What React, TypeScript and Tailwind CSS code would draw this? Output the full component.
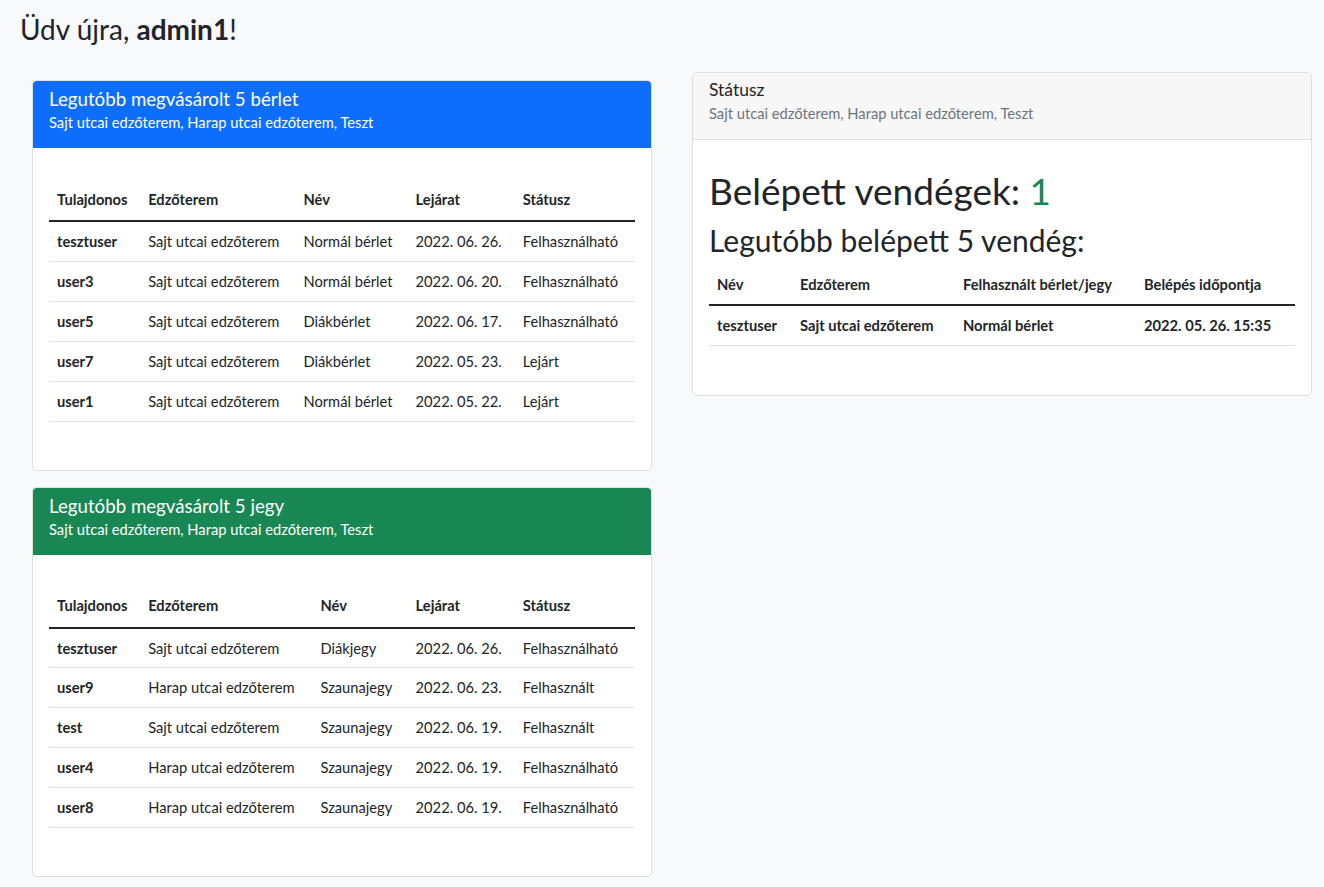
import React from "react";

type Row = string[];

const berlet: Row[] = [
  ["tesztuser", "Sajt utcai edzőterem", "Normál bérlet", "2022. 06. 26.", "Felhasználható"],
  ["user3", "Sajt utcai edzőterem", "Normál bérlet", "2022. 06. 20.", "Felhasználható"],
  ["user5", "Sajt utcai edzőterem", "Diákbérlet", "2022. 06. 17.", "Felhasználható"],
  ["user7", "Sajt utcai edzőterem", "Diákbérlet", "2022. 05. 23.", "Lejárt"],
  ["user1", "Sajt utcai edzőterem", "Normál bérlet", "2022. 05. 22.", "Lejárt"],
];

const jegy: Row[] = [
  ["tesztuser", "Sajt utcai edzőterem", "Diákjegy", "2022. 06. 26.", "Felhasználható"],
  ["user9", "Harap utcai edzőterem", "Szaunajegy", "2022. 06. 23.", "Felhasznált"],
  ["test", "Sajt utcai edzőterem", "Szaunajegy", "2022. 06. 19.", "Felhasznált"],
  ["user4", "Harap utcai edzőterem", "Szaunajegy", "2022. 06. 19.", "Felhasználható"],
  ["user8", "Harap utcai edzőterem", "Szaunajegy", "2022. 06. 19.", "Felhasználható"],
];

const heads = ["Tulajdonos", "Edzőterem", "Név", "Lejárat", "Státusz"];

function PurchaseTable({ rows, widths }: { rows: Row[]; widths: string[] }) {
  return (
    <table className="w-full table-fixed border-collapse text-[14.7px] text-[#212529]">
      <colgroup>
        {widths.map((w, i) => (
          <col key={i} className={w} />
        ))}
      </colgroup>
      <thead>
        <tr className="h-[43px] border-b-2 border-[#212529]">
          {heads.map((h) => (
            <th key={h} className="px-2 text-left align-middle font-bold">
              {h}
            </th>
          ))}
        </tr>
      </thead>
      <tbody>
        {rows.map((r, i) => (
          <tr key={i} className="h-[40px] border-b border-[#dee2e6]">
            {r.map((c, j) => (
              <td key={j} className={`px-2 align-middle whitespace-nowrap ${j === 0 ? "font-bold" : "font-normal"}`}>
                {c}
              </td>
            ))}
          </tr>
        ))}
      </tbody>
    </table>
  );
}

function PurchaseCard({
  title,
  headerClass,
  rows,
  widths,
}: {
  title: string;
  headerClass: string;
  rows: Row[];
  widths: string[];
}) {
  return (
    <div className="overflow-hidden rounded-[5px] border border-[#dfdfdf] bg-white">
      <div className={`h-[67px] px-4 pt-[6px] text-white ${headerClass}`}>
        <div className="text-[18.7px] leading-[24px]">{title}</div>
        <div className="mt-[1px] text-[14.7px] leading-[20px]">
          Sajt utcai edzőterem, Harap utcai edzőterem, Teszt
        </div>
      </div>
      <div className="px-4 pt-[30px] pb-[48px]">
        <PurchaseTable rows={rows} widths={widths} />
      </div>
    </div>
  );
}

export default function App() {
  return (
    <div
      className="min-h-[887px] bg-[#f8f9fa] text-[#212529]"
      style={{ fontFamily: "Lato, 'Open Sans', sans-serif" }}
    >
      <div className="px-5 pt-[12px]">
        <h3 className="text-[28px] leading-[34px]">
          Üdv újra, <span className="font-bold">admin1</span>!
        </h3>
      </div>
      <div className="mt-[26px] flex gap-[40px] px-[12px]">
        <div className="flex w-[620px] flex-col gap-[16px] pt-[8px] pl-[20px] box-content">
          <PurchaseCard
            title="Legutóbb megvásárolt 5 bérlet"
            headerClass="bg-[#0d6efd]"
            rows={berlet}
            widths={["w-[91px]", "w-[155px]", "w-[112px]", "w-[107px]", "w-[120px]"]}
          />
          <PurchaseCard
            title="Legutóbb megvásárolt 5 jegy"
            headerClass="bg-[#198754]"
            rows={jegy}
            widths={["w-[91px]", "w-[172px]", "w-[95px]", "w-[107px]", "w-[120px]"]}
          />
        </div>
        <div className="w-[620px]">
          <div className="overflow-hidden rounded-[5px] border border-[#dfdfdf] bg-white">
            <div className="h-[67px] border-b border-[#dfdfdf] bg-[#f7f7f7] px-4 pt-[6px]">
              <div className="text-[17.5px] leading-[22px]">Státusz</div>
              <div className="mt-[2px] text-[14.7px] leading-[20px] text-[#6c757d]">
                Sajt utcai edzőterem, Harap utcai edzőterem, Teszt
              </div>
            </div>
            <div className="px-4 pt-[27px] pb-[49px]">
              <div className="text-[37px] leading-[48px]">
                Belépett vendégek: <span className="text-[#198754]">1</span>
              </div>
              <div className="mt-[5px] text-[30px] leading-[40px]">Legutóbb belépett 5 vendég:</div>
              <table className="mt-[5px] w-full table-fixed border-collapse text-[14.7px] text-[#212529]">
                <colgroup>
                  <col className="w-[83px]" />
                  <col className="w-[163px]" />
                  <col className="w-[181px]" />
                  <col className="w-[159px]" />
                </colgroup>
                <thead>
                  <tr className="h-[40px] border-b-2 border-[#212529]">
                    {["Név", "Edzőterem", "Felhasznált bérlet/jegy", "Belépés időpontja"].map((h) => (
                      <th key={h} className="px-2 text-left align-middle font-bold">
                        {h}
                      </th>
                    ))}
                  </tr>
                </thead>
                <tbody>
                  <tr className="h-[40px] border-b border-[#dee2e6]">
                    {["tesztuser", "Sajt utcai edzőterem", "Normál bérlet", "2022. 05. 26. 15:35"].map((c) => (
                      <td key={c} className="px-2 align-middle font-bold whitespace-nowrap">
                        {c}
                      </td>
                    ))}
                  </tr>
                </tbody>
              </table>
            </div>
          </div>
        </div>
      </div>
    </div>
  );
}
